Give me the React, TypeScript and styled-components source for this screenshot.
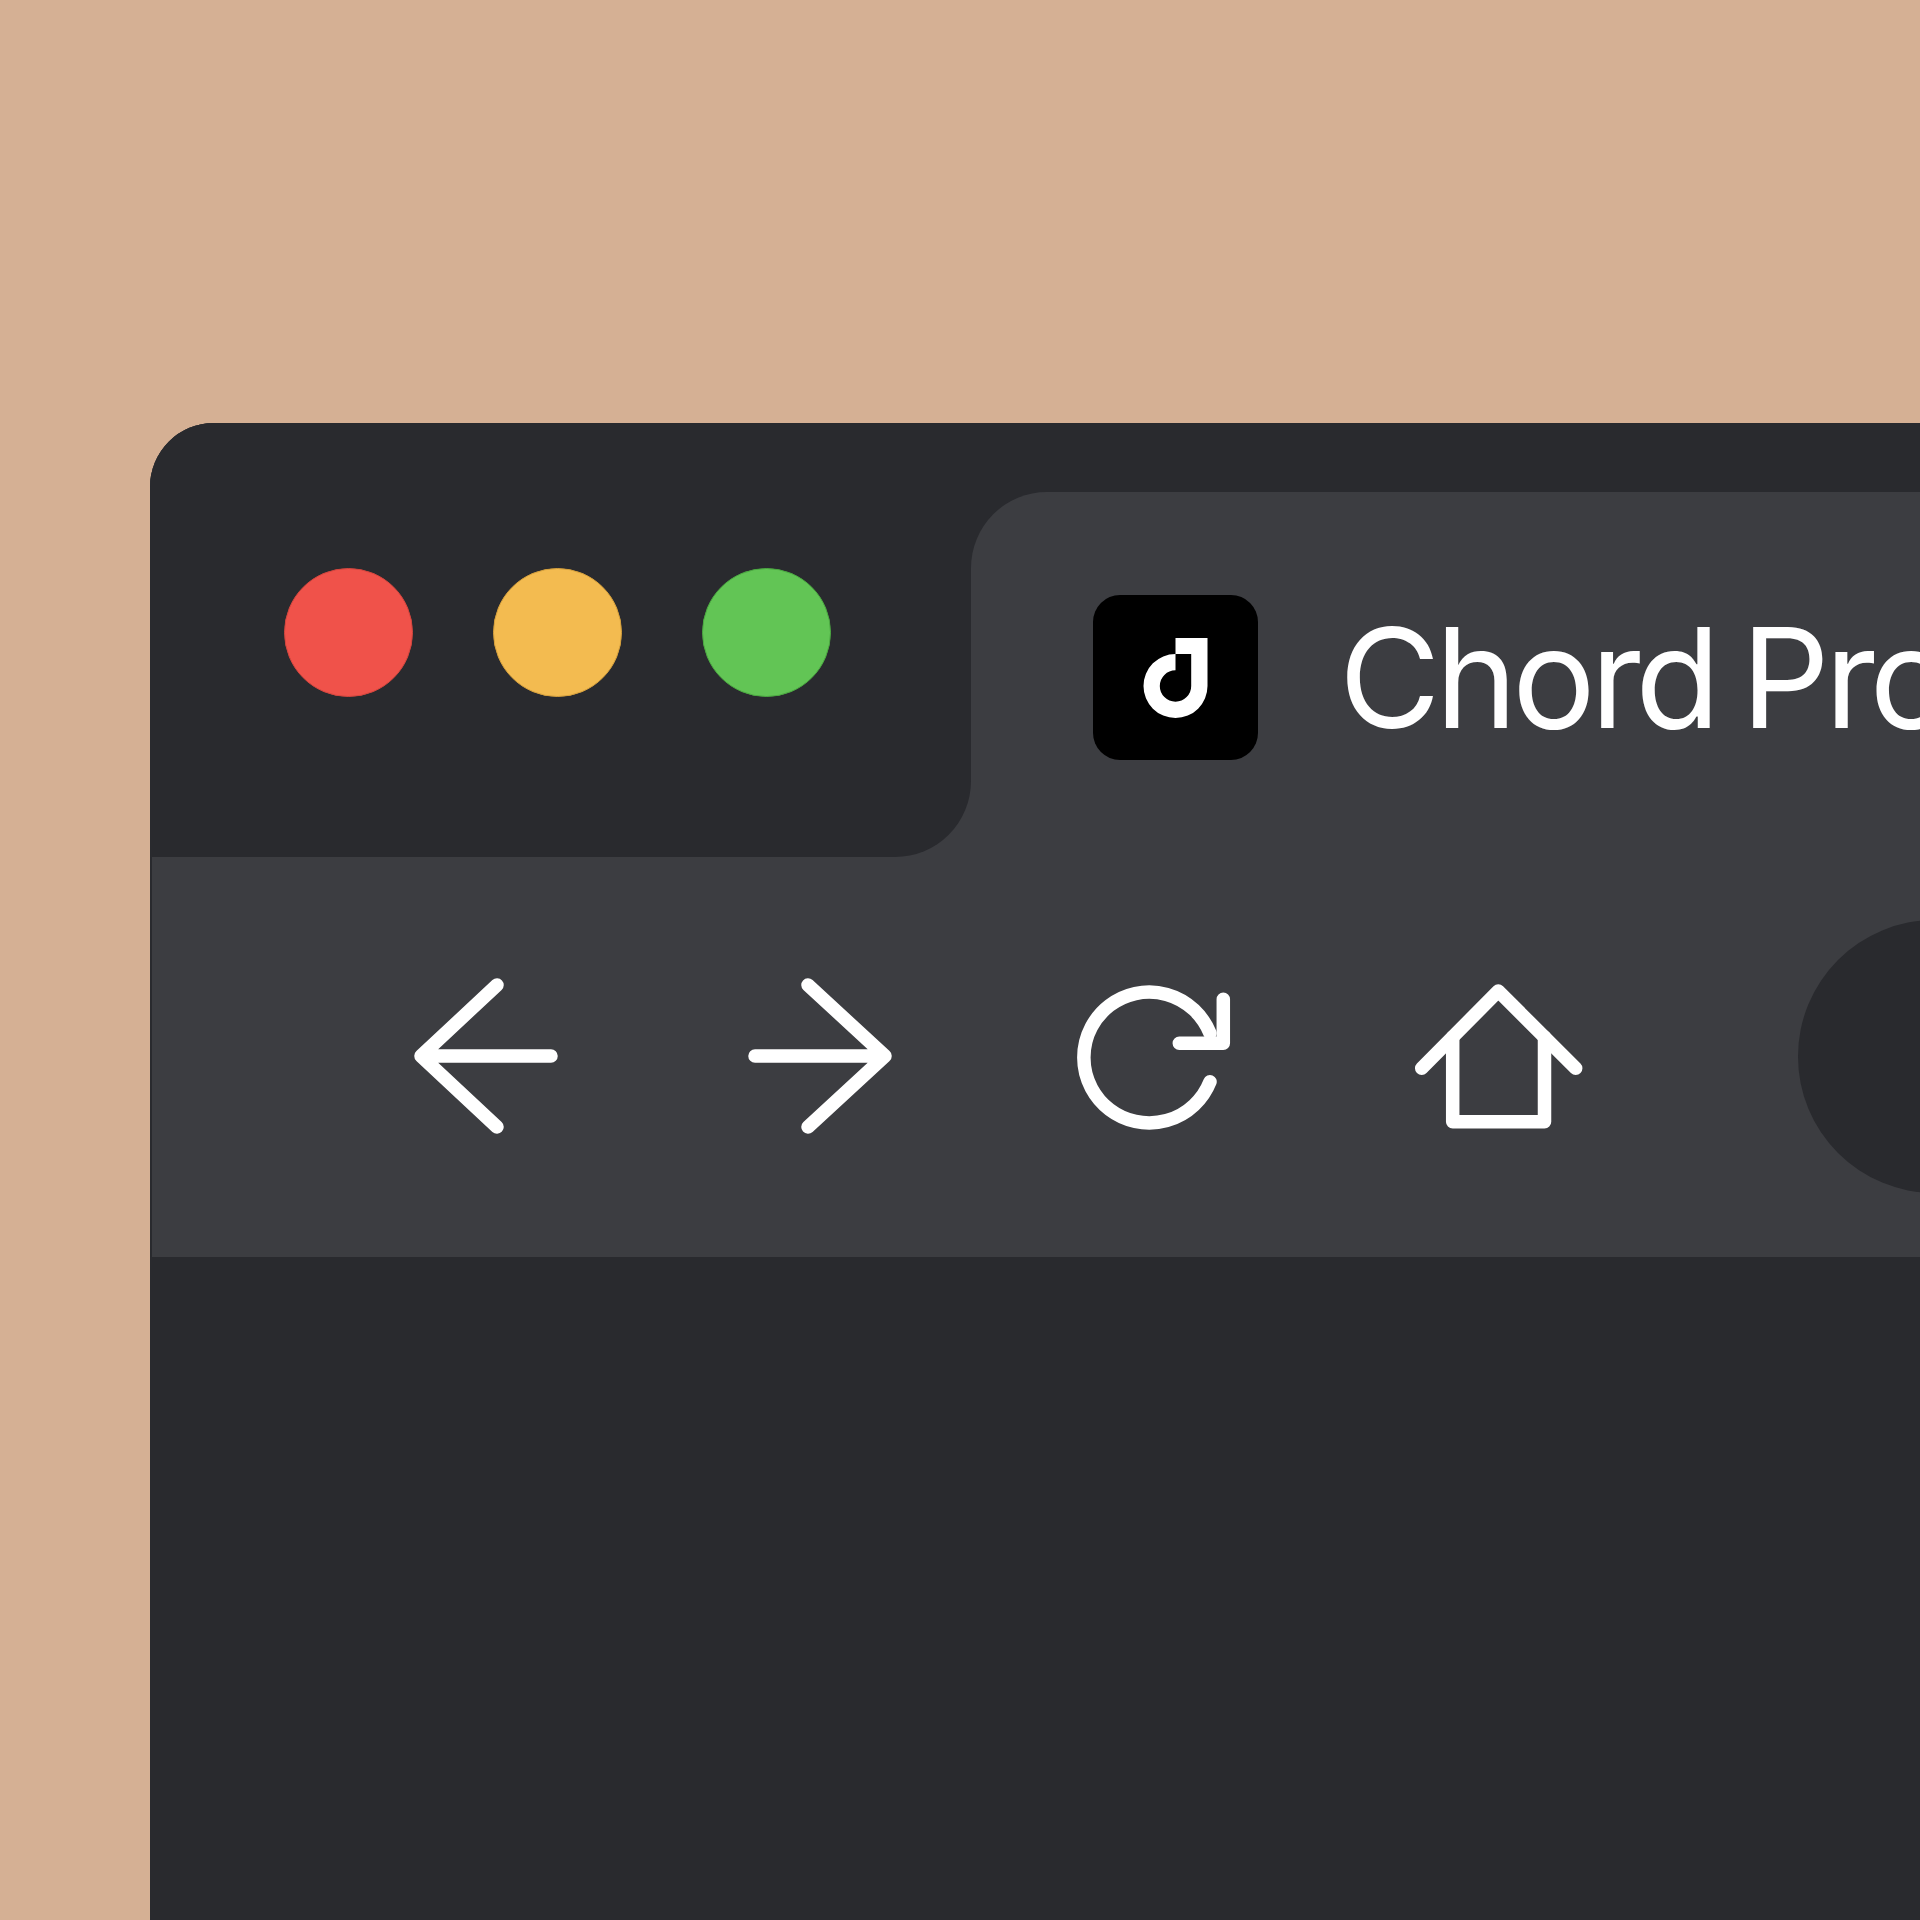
import styled, { createGlobalStyle } from 'styled-components';

const GlobalStyle = createGlobalStyle`
  html, body {
    margin: 0;
    padding: 0;
  }
  body {
    font-family: Inter, "Liberation Sans", sans-serif;
  }
`;

function App() {
  return (
    <>
      <GlobalStyle />
      <Page>
        <Browser>
          <TabBar>
            <LightsSlot>
              <Lights>
                <Light $fill='#f0524a' $edge='#d4463e' />
                <Light $fill='#f3bb50' $edge='#d6a03c' />
                <Light $fill='#62c555' $edge='#4ba941' />
              </Lights>
            </LightsSlot>
            <Tab>
              <AppLogo>
                <svg width='165' height='165' viewBox='0 0 165 165'>
                  <path
                    fill='#fff'
                    fillRule='evenodd'
                    d='M82.5 43 H114.5 V91 A32 32 0 1 1 82.5 59 V75.3 A15.7 15.7 0 1 0 98.2 91 V59 H82.5 Z'
                  />
                </svg>
              </AppLogo>
              <TabTitle>Chord Pro</TabTitle>
            </Tab>
          </TabBar>

          <Toolbar>
            <NavIcon width='152' height='160' viewBox='0 0 152 160'>
              <path d='M87 9 L11 80 L87 151 M11 80 H141' />
            </NavIcon>
            <NavIcon width='153' height='160' viewBox='0 0 153 160'>
              <path d='M66 9 L143 80 L66 151 M143 80 H13' />
            </NavIcon>
            <NavIcon width='158' height='160' viewBox='0 0 158 160'>
              <path d='M135 105.7 A65.4 65.4 0 1 1 135 57.3' />
              <path d='M148.3 23.3 V67.3 H104.3' />
            </NavIcon>
            <NavIcon width='175' height='160' viewBox='0 0 175 160'>
              <path d='M8.7 92.3 L85.3 15 L162.7 92.3' />
              <path d='M39.7 61 V145.7 H131.5 V61' />
            </NavIcon>
            <AddressBar />
          </Toolbar>
        </Browser>
      </Page>
    </>
  );
}

export default App;

const Page = styled.div`
  width: 1920px;
  height: 1920px;
  padding: 423px 0 0 150px;
  box-sizing: border-box;
  background-color: #d5b094;
  overflow: hidden;
`;

const Browser = styled.div`
  height: 100%;
  background-color: #292a2e;
  border-top-left-radius: 64px;
  overflow: hidden;
`;

const TabBar = styled.div`
  display: flex;
  height: 434px;
`;

const LightsSlot = styled.div`
  width: 821px;
  flex-shrink: 0;
  background-color: #3c3d41;
`;

const Lights = styled.div`
  height: 100%;
  box-sizing: border-box;
  display: flex;
  align-items: flex-start;
  gap: 80px;
  padding: 145px 0 0 134px;
  background-color: #292a2e;
  border-bottom-right-radius: 76px;
`;

const Light = styled.span<{ $fill: string; $edge: string }>`
  width: 129px;
  height: 129px;
  box-sizing: border-box;
  border-radius: 50%;
  background-color: ${(p) => p.$fill};
  border: 1.5px solid ${(p) => p.$edge};
`;

const Tab = styled.div`
  flex: 1;
  min-width: 0;
  margin-top: 69px;
  display: flex;
  align-items: flex-start;
  gap: 81px;
  padding: 103px 0 0 122px;
  background-color: #3c3d41;
  border-top-left-radius: 76px;
  overflow: hidden;
`;

const AppLogo = styled.div`
  width: 165px;
  height: 165px;
  flex-shrink: 0;
  background-color: #000;
  border-radius: 27px;
  svg {
    display: block;
  }
`;

const TabTitle = styled.div`
  font-size: 139px;
  line-height: 165px;
  font-weight: 400;
  letter-spacing: -5.2px;
  word-spacing: -8px;
  color: #fff;
  white-space: nowrap;
`;

const Toolbar = styled.div`
  height: 400px;
  box-sizing: border-box;
  display: flex;
  align-items: flex-start;
  gap: 180px;
  padding: 119px 0 0 258px;
  background-color: #3c3d41;
  border-left: 2px solid #292a2e;
`;

const NavIcon = styled.svg`
  flex-shrink: 0;
  fill: none;
  stroke: #fff;
  stroke-width: 13.5;
  stroke-linecap: round;
  stroke-linejoin: round;
`;

const AddressBar = styled.div`
  flex-shrink: 0;
  width: 900px;
  height: 273px;
  margin: -56px 0 0 30px;
  background-color: #292a2e;
  border-radius: 137px;
`;
